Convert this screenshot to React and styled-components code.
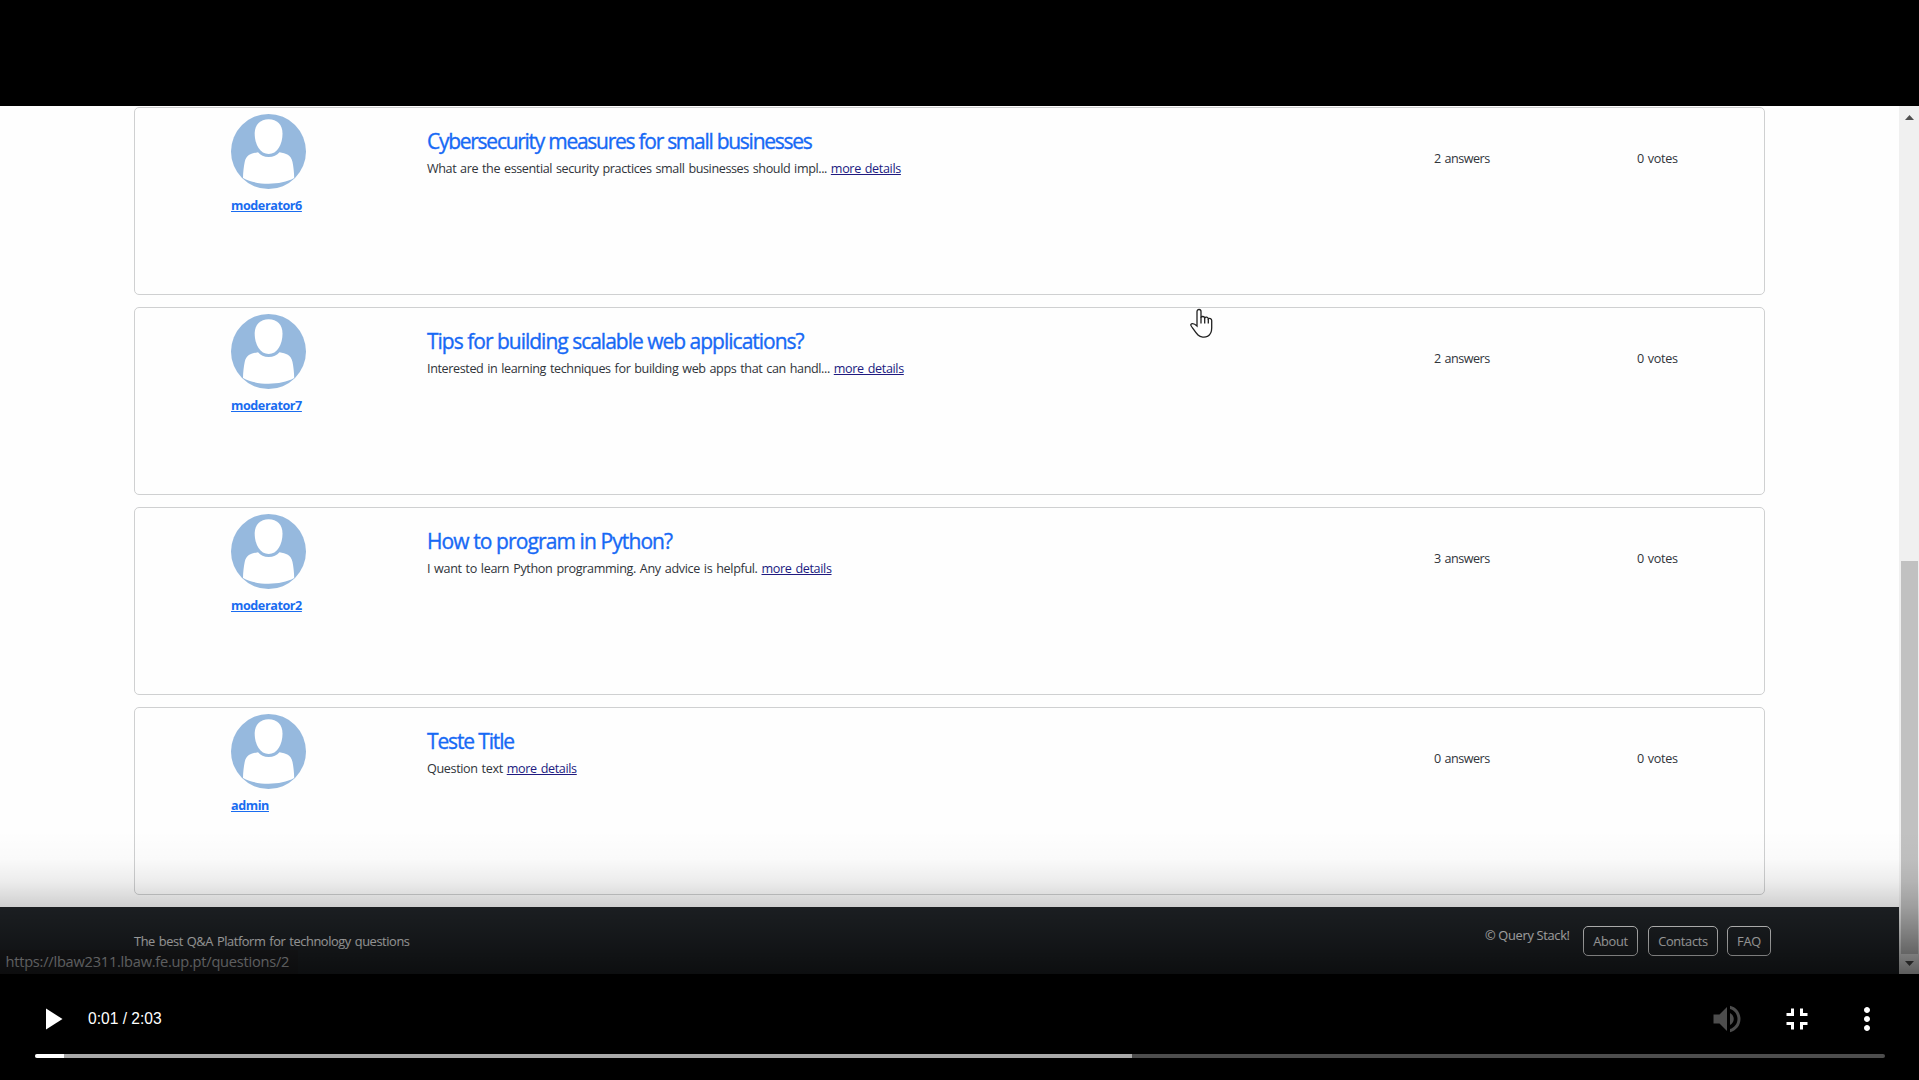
import React from "react";
import styled, { createGlobalStyle } from "styled-components";

const Global = createGlobalStyle`
  *, *::before, *::after { box-sizing: border-box; }
  html, body { margin: 0; background: #000; overflow: hidden; }
  svg { display: block; }
`;

const Player = styled.main`
  display: flex;
  flex-direction: column;
  width: 1919px;
  height: 1080px;
  padding-top: 106px;
  background: #000;
  font-family: "Open Sans", "Noto Sans", sans-serif;
`;

const Frame = styled.section`
  position: relative;
  display: flex;
  height: 868px;
  flex: none;
  background: #fefefe;
`;

const Page = styled.div`
  display: flex;
  flex-direction: column;
  width: 1899px;
`;

const List = styled.div`
  display: flex;
  flex-direction: column;
  gap: 12px;
  height: 801px;
  padding: 1px 134px 0;
`;

const Card = styled.article`
  display: grid;
  grid-template-columns: 196px 1007px 203px 1fr;
  height: 188px;
  width: 1631px;
  padding: 6px 0 0 96px;
  border: 1px solid #cfd0d1;
  border-radius: 5px;
`;

const Author = styled.div`
  display: flex;
  flex-direction: column;
  align-items: flex-start;
  gap: 8px;
`;

const AuthorName = styled.a`
  color: #1a6cf0;
  font-size: 12.6px;
  font-weight: 700;
  line-height: 18px;
  letter-spacing: -0.42px;
  text-decoration: underline;
  text-decoration-thickness: 1px;
  text-underline-offset: 1px;
  white-space: nowrap;
`;

const Body = styled.div`
  padding-top: 12px;
`;

const Title = styled.h2`
  margin: 0;
  color: #1769f5;
  font-size: 21px;
  font-weight: 500;
  line-height: 30px;
  letter-spacing: ${(p) => p.$track}px;
  -webkit-text-stroke: 0.35px #1769f5;
  white-space: nowrap;
`;

const Excerpt = styled.p`
  margin: 3px 0 0;
  color: #30343a;
  font-size: 12.6px;
  line-height: 20px;
  letter-spacing: ${(p) => p.$track}px;
  word-spacing: 1px;
  white-space: nowrap;
`;

const More = styled.a`
  color: #201a80;
  letter-spacing: -0.36px;
  text-decoration: underline;
  text-decoration-thickness: 1px;
  text-underline-offset: 1px;
`;

const Count = styled.span`
  padding-top: 35px;
  color: #30343a;
  font-size: 12.6px;
  line-height: 20px;
  letter-spacing: ${(p) => p.$track}px;
  word-spacing: 1px;
  white-space: nowrap;
`;

const Footer = styled.footer`
  display: flex;
  justify-content: space-between;
  align-items: flex-start;
  height: 67px;
  padding: 19px 128px 0 134px;
  background: #212529;
  color: #f4f4f4;
  font-size: 12.8px;
  line-height: 30px;
  white-space: nowrap;
`;

const Tagline = styled.span`
  letter-spacing: -0.4px;
  word-spacing: 1px;
`;

const FooterLinks = styled.nav`
  display: flex;
`;

const Copyright = styled.span`
  width: 98px;
  margin-top: -6px;
  letter-spacing: -0.3px;
`;

const FooterButton = styled.a`
  width: ${(p) => p.$width}px;
  height: 30px;
  margin-right: ${(p) => p.$after}px;
  border: 1px solid #f4f4f4;
  border-radius: 5px;
  line-height: 29px;
  letter-spacing: -0.3px;
  text-align: center;
`;

const ScrollTrack = styled.div`
  display: flex;
  flex-direction: column;
  justify-content: space-between;
  align-items: center;
  width: 20px;
  padding: 9px 0 8px;
  background: #f0f0f0;
`;

const ScrollThumb = styled.div`
  width: 17px;
  height: 393px;
  margin: 441px 0 7px 1px;
  background: #c1c1c1;
`;

const Arrow = styled.svg`
  width: 9px;
  height: 5px;
  margin-left: 1px;
  fill: #505050;
`;

const LinkStatus = styled.div`
  position: absolute;
  left: 0;
  bottom: 0;
  width: 298px;
  height: 24px;
  padding-left: 5.5px;
  background: #202124;
  color: #c8cacd;
  font-size: 14.6px;
  line-height: 22px;
  letter-spacing: -0.23px;
  white-space: nowrap;
`;

const Shade = styled.div`
  position: absolute;
  inset: auto 0 0;
  height: 144px;
  background: linear-gradient(
    rgba(0, 0, 0, 0) 0%,
    rgba(0, 0, 0, 0.015) 20%,
    rgba(0, 0, 0, 0.07) 36%,
    rgba(0, 0, 0, 0.18) 53%,
    rgba(0, 0, 0, 0.37) 74%,
    rgba(0, 0, 0, 0.61) 100%
  );
`;

const Pointer = styled.svg`
  position: absolute;
  left: 1189px;
  top: 201.5px;
`;

const Controls = styled.div`
  display: flex;
  align-items: center;
  height: 36px;
  margin-top: 26.5px;
  padding: 0 34.5px 0 34px;
  color: #fff;
`;

const Time = styled.span`
  flex: 1;
  margin-left: 18px;
  font: 400 15.6px/35px "Liberation Sans", Arial, sans-serif;
`;

const Icon = styled.svg`
  width: 36px;
  height: 36px;
  margin-left: ${(p) => p.$before || 0}px;
  fill: ${(p) => (p.$dim ? "#4d4d4d" : "#fff")};
`;

const Progress = styled.div`
  display: flex;
  width: 1850px;
  height: 4px;
  margin: 17.5px 0 0 35px;
  border-radius: 2px;
  overflow: hidden;
  background: #4d4d4d;
`;

const Segment = styled.div`
  width: ${(p) => p.$width}px;
  background: ${(p) => p.$color};
`;

const questions = [
  { user: "moderator6", title: "Cybersecurity measures for small businesses", titleTrack: -1.27, text: "What are the essential security practices small businesses should impl...", textTrack: -0.4, answers: 2 },
  { user: "moderator7", title: "Tips for building scalable web applications?", titleTrack: -1, text: "Interested in learning techniques for building web apps that can handl...", textTrack: -0.39, answers: 2 },
  { user: "moderator2", title: "How to program in Python?", titleTrack: -0.9, text: "I want to learn Python programming. Any advice is helpful.", textTrack: -0.35, answers: 3 },
  { user: "admin", title: "Teste Title", titleTrack: -1.14, text: "Question text", textTrack: -0.36, answers: 0 },
];

const Avatar = () => (
  <svg width="75" height="75" viewBox="0 0 75 75">
    <circle cx="37.5" cy="37.5" r="37.5" fill="#96b9de" />
    <path
      d="M37.7 5.2C46 5.2 51.5 10.5 51.5 19.5C51.5 31 46 40 37.7 40C29.3 40 23.7 31 23.7 19.5C23.7 10.5 29.3 5.2 37.7 5.2Z"
      fill="#fff"
    />
    <path
      d="M27 38.2C29.5 41 33 43 37.7 43C42.3 43 46 41 48.5 38.2C55 39.5 60 40.5 61.5 48C62.5 53 63.1 58 63.2 64C56 68 47 69.7 37.6 69.7C28 69.7 19 68 12 64C12.1 58 12.7 53 13.7 48C15.5 40.5 20.5 39.5 27 38.2Z"
      fill="#fff"
    />
  </svg>
);

const Hand = () => (
  <Pointer width="26" height="32" viewBox="0 0 26 32">
    <path
      d="M8 18V3.5C8 .8 12 .8 12 3.5V9.5C12.5 8 15.3 8.2 15.7 9.8C16.6 8.7 19 9 19.3 10.8C20.5 9.8 22.7 10.8 22.7 12.5V20C22.7 24 21 27 18.5 28.3C16 29.8 11.5 29.5 9 27C6.5 24.5 5 22 3.5 19.8C2 18 1 16.5 2.5 15.8C4.5 15 6.5 16.5 8 18Z"
      fill="#fff"
      stroke="#222"
      strokeWidth="1.3"
    />
    <path d="M12 9V15.5M15.7 10V15.5M19.3 11V15.5" fill="none" stroke="#222" strokeWidth="1.3" />
  </Pointer>
);

const Question = ({ q }) => (
  <Card>
    <Author>
      <Avatar />
      <AuthorName>{q.user}</AuthorName>
    </Author>
    <Body>
      <Title $track={q.titleTrack}>{q.title}</Title>
      <Excerpt $track={q.textTrack}>
        {q.text} <More>more details</More>
      </Excerpt>
    </Body>
    <Count $track={-0.5}>{q.answers} answers</Count>
    <Count $track={-0.32}>0 votes</Count>
  </Card>
);

export default function App() {
  return (
    <Player>
      <Global />
      <Frame>
        <Page>
          <List>
            {questions.map((q) => (
              <Question key={q.title} q={q} />
            ))}
          </List>
          <Footer>
            <Tagline>The best Q&amp;A Platform for technology questions</Tagline>
            <FooterLinks>
              <Copyright>© Query Stack!</Copyright>
              <FooterButton $width={55} $after={10}>About</FooterButton>
              <FooterButton $width={70} $after={9}>Contacts</FooterButton>
              <FooterButton $width={44} $after={0}>FAQ</FooterButton>
            </FooterLinks>
          </Footer>
        </Page>
        <ScrollTrack>
          <Arrow viewBox="0 0 9 5"><path d="M4.5 0L9 5H0Z" /></Arrow>
          <ScrollThumb />
          <Arrow viewBox="0 0 9 5"><path d="M0 0H9L4.5 5Z" /></Arrow>
        </ScrollTrack>
        <LinkStatus>https://lbaw2311.lbaw.fe.up.pt/questions/2</LinkStatus>
        <Hand />
        <Shade />
      </Frame>
      <Controls>
        <Icon viewBox="0 0 24 24"><path d="M8 5v14l11-7z" /></Icon>
        <Time>0:01 / 2:03</Time>
        <Icon viewBox="0 0 24 24" $dim>
          <path d="M3 9v6h4l5 5V4L7 9H3zm13.5 3c0-1.77-1.02-3.29-2.5-4.03v8.05c1.48-.73 2.5-2.25 2.5-4.02zM14 3.23v2.06c2.89.86 5 3.54 5 6.71s-2.11 5.85-5 6.71v2.06c4.01-.91 7-4.49 7-8.77s-2.99-7.86-7-8.77z" />
        </Icon>
        <Icon viewBox="0 0 24 24" $before={34}>
          <path d="M5 16h3v3h2v-5H5v2zm3-8H5v2h5V5H8v3zm6 11h2v-3h3v-2h-5v5zm2-11V5h-2v5h5V8h-3z" />
        </Icon>
        <Icon viewBox="0 0 24 24" $before={34}>
          <path d="M12 8c1.1 0 2-.9 2-2s-.9-2-2-2-2 .9-2 2 .9 2 2 2zm0 2c-1.1 0-2 .9-2 2s.9 2 2 2 2-.9 2-2-.9-2-2-2zm0 6c-1.1 0-2 .9-2 2s.9 2 2 2 2-.9 2-2-.9-2-2-2z" />
        </Icon>
      </Controls>
      <Progress>
        <Segment $width={29} $color="#fff" />
        <Segment $width={1068} $color="#a9a9a9" />
      </Progress>
    </Player>
  );
}
